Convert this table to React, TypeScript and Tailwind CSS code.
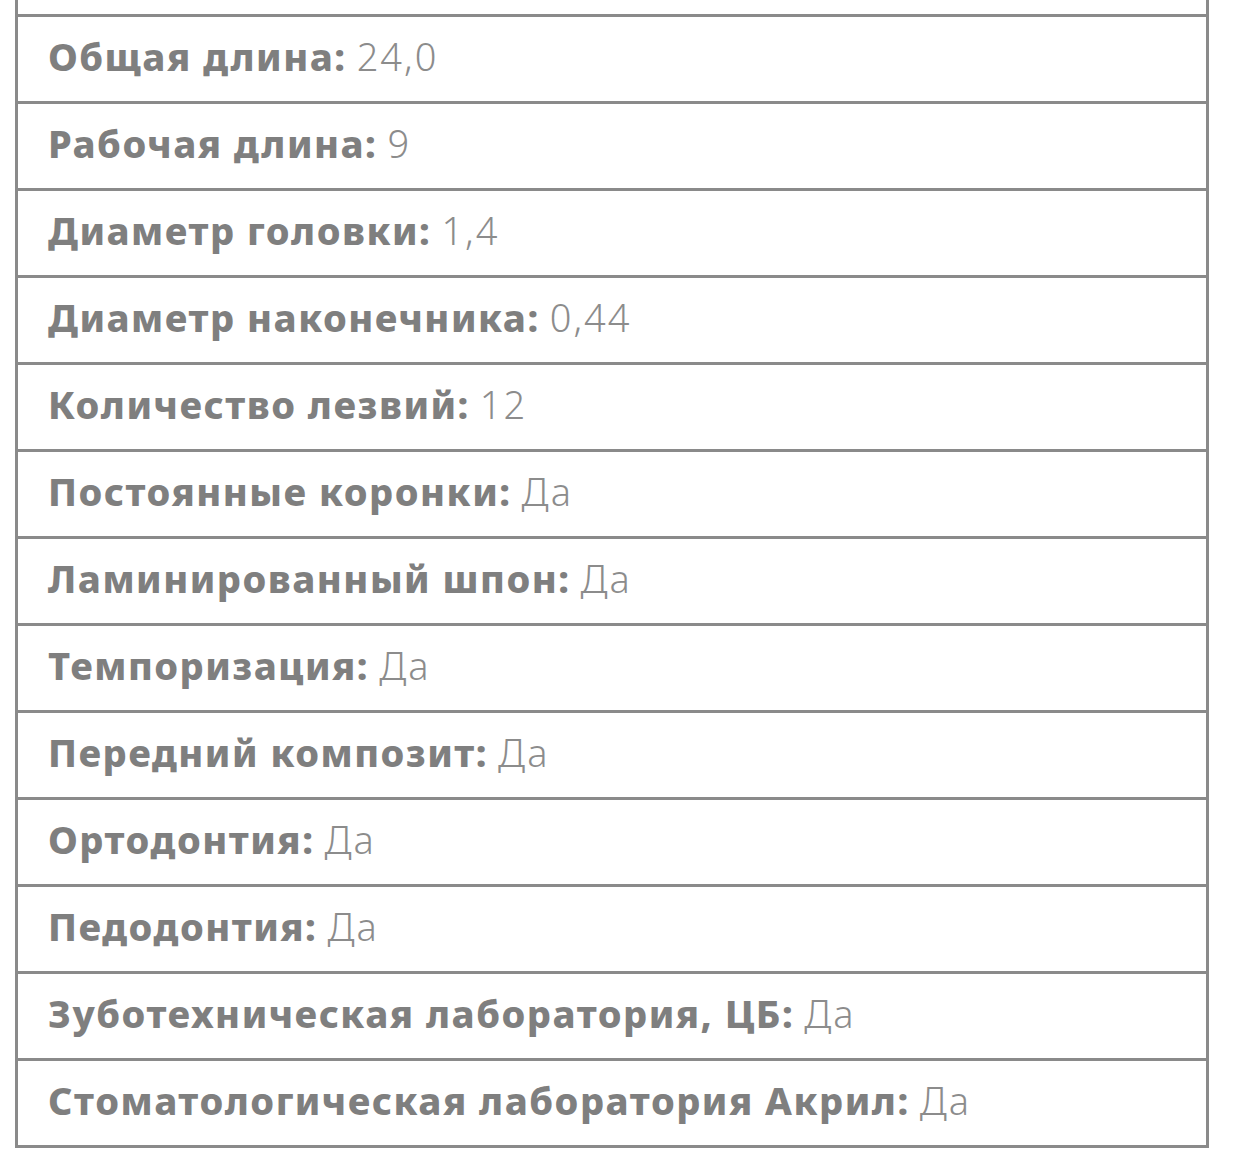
const specs: [string, string][] = [
  ["Общая длина:", "24,0"],
  ["Рабочая длина:", "9"],
  ["Диаметр головки:", "1,4"],
  ["Диаметр наконечника:", "0,44"],
  ["Количество лезвий:", "12"],
  ["Постоянные коронки:", "Да"],
  ["Ламинированный шпон:", "Да"],
  ["Темпоризация:", "Да"],
  ["Передний композит:", "Да"],
  ["Ортодонтия:", "Да"],
  ["Педодонтия:", "Да"],
  ["Зуботехническая лаборатория, ЦБ:", "Да"],
  ["Стоматологическая лаборатория Акрил:", "Да"],
];

export default function App() {
  return (
    <div className="min-h-[1173px] bg-white pl-[15px] pr-[26px] font-['Noto_Sans',sans-serif]">
      <div className="border-x-[3px] border-[#8a8a8a]">
        <div className="h-[17px] border-b-[3px] border-[#8a8a8a]" />
        {specs.map(([label, value]) => (
          <div
            key={label}
            className="flex h-[87px] items-center border-b-[3px] border-[#8a8a8a] pb-[6px] pl-[30px] text-[38px] leading-none text-[#7f7f7f]"
          >
            <span className="font-extrabold tracking-[1.5px]">{label}</span>
            <span className="ml-[10px] font-light tracking-[2px] text-[#8c8c8c]">{value}</span>
          </div>
        ))}
      </div>
    </div>
  );
}
